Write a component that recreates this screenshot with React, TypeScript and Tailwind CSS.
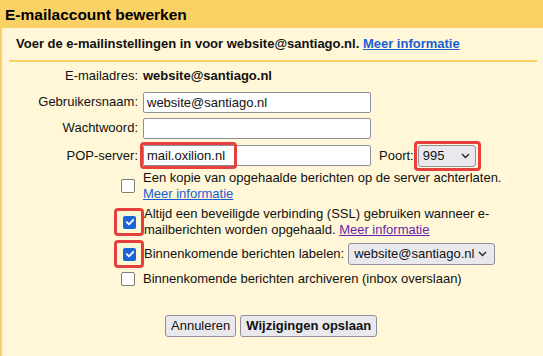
import React from 'react'

const RedMark = ({ className }: { className: string }) => (
  <span className={`pointer-events-none absolute rounded-[4px] border-[3px] border-[#e5403b] ${className}`} />
)

const Check = ({ checked }: { checked?: boolean }) =>
  checked ? (
    <span className="flex h-[13px] w-[13px] items-center justify-center rounded-[2px] bg-[#1a66d9]">
      <svg width="10" height="10" viewBox="0 0 10 10">
        <path d="M1.8 5.2 L4 7.3 L8.3 2.8" fill="none" stroke="#fff" strokeWidth="1.8" strokeLinecap="round" strokeLinejoin="round" />
      </svg>
    </span>
  ) : (
    <span className="block h-[14px] w-[14px] rounded-[2px] border-[1.5px] border-[#7d7d7d] bg-white" />
  )

const Chevron = () => (
  <svg width="9" height="6" viewBox="0 0 9 6" className="shrink-0">
    <path d="M1 1 L4.5 4.5 L8 1" fill="none" stroke="#222" strokeWidth="1.4" />
  </svg>
)

export default function App() {
  return (
    <div className="h-[356px] w-[543px] overflow-hidden bg-[#fff7d7] font-['Liberation_Sans',Arial,sans-serif] text-[13px] text-[#111]">
      {/* Header */}
      <div className="h-[28px] bg-[#fad165] pl-[5px] text-[15.5px] font-bold leading-[30px] text-black">
        E-mailaccount bewerken
      </div>

      <div className="h-[328px] border-l-2 border-[#fad165]">
        <div className="pl-[14px] pt-[8px] font-bold leading-[16px]">
          Voer de e-mailinstellingen in voor website@santiago.nl.{' '}
          <a className="text-[#1a5fd6] underline">Meer informatie</a>
        </div>
        <div className="ml-[7px] mt-[8px] h-[2px] w-[528px] bg-[#fad165]" />

        {/* Form rows */}
        <div className="pt-px">
          <div className="flex h-[26px] items-center">
            <div className="w-[136px] text-right">E-mailadres:</div>
            <div className="pl-[5px] font-bold">website@santiago.nl</div>
          </div>
          <div className="flex h-[26px] items-center">
            <div className="w-[136px] text-right">Gebruikersnaam:</div>
            <div className="pl-[5px]">
              <div className="h-[21px] w-[228px] rounded-[2px] border border-[#8f8f9d] bg-white pl-[3px] leading-[19px]">
                website@santiago.nl
              </div>
            </div>
          </div>
          <div className="flex h-[26px] items-center">
            <div className="w-[136px] text-right">Wachtwoord:</div>
            <div className="pl-[5px]">
              <div className="h-[21px] w-[228px] rounded-[2px] border border-[#8f8f9d] bg-white" />
            </div>
          </div>
          <div className="flex h-[29px] items-center">
            <div className="w-[136px] text-right">POP-server:</div>
            <div className="relative pl-[5px]">
              <div className="h-[21px] w-[228px] rounded-[2px] border border-[#8f8f9d] bg-white pl-[3px] leading-[19px]">
                mail.oxilion.nl
              </div>
              <RedMark className="left-[2px] top-[-3px] h-[27px] w-[97px]" />
            </div>
            <div className="pl-[8px]">Poort:</div>
            <div className="relative ml-[4px]">
              <div className="flex h-[22px] w-[58px] items-center justify-between rounded-[3px] border border-[#8f8f9d] bg-[#e9e9ed] pl-[4px] pr-[5px]">
                <span>995</span>
                <Chevron />
              </div>
              <RedMark className="left-[-4px] top-[-4px] h-[30px] w-[67px]" />
            </div>
          </div>

          {/* Checkbox rows */}
          <div className="flex items-center leading-[16px]">
            <div className="flex w-[134px] justify-end pr-[1px]">
              <Check />
            </div>
            <div className="pl-[7px]">
              Een kopie van opgehaalde berichten op de server achterlaten.
              <br />
              <a className="text-[#1a5fd6] underline">Meer informatie</a>
            </div>
          </div>

          <div className="mt-[4px] flex items-center leading-[16px]">
            <div className="flex w-[134px] justify-end">
              <div className="relative">
                <Check checked />
                <RedMark className="left-[-9px] top-[-8px] h-[28px] w-[30px]" />
              </div>
            </div>
            <div className="pl-[8px] pr-[50px]">
              Altijd een beveiligde verbinding (SSL) gebruiken wanneer e-
              <br />
              mailberichten worden opgehaald.{' '}
              <a className="text-[#6a1fa8] underline">Meer informatie</a>
            </div>
          </div>

          <div className="mt-[4px] flex h-[24px] items-center">
            <div className="flex w-[134px] justify-end">
              <div className="relative">
                <Check checked />
                <RedMark className="left-[-9px] top-[-8px] h-[28px] w-[30px]" />
              </div>
            </div>
            <div className="pl-[8px]">Binnenkomende berichten labelen:</div>
            <div className="ml-[4px] flex h-[22px] w-[147px] items-center justify-between rounded-[3px] border border-[#8f8f9d] bg-[#e9e9ed] pl-[5px] pr-[7px]">
              <span>website@santiago.nl</span>
              <Chevron />
            </div>
          </div>

          <div className="mt-[5px] flex items-center leading-[16px]">
            <div className="flex w-[134px] justify-end pr-[1px]">
              <Check />
            </div>
            <div className="pl-[7px]">Binnenkomende berichten archiveren (inbox overslaan)</div>
          </div>

          {/* Buttons */}
          <div className="mt-[28px] flex gap-[4px] pl-[163px]">
            <button
              type="button"
              className="h-[22px] rounded-[3px] border border-[#8f8f9d] bg-[#e9e9ed] px-[5px] text-[13px] leading-[20px]"
            >
              Annuleren
            </button>
            <button
              type="button"
              className="h-[22px] rounded-[3px] border border-[#8f8f9d] bg-[#e9e9ed] px-[5px] text-[13px] font-bold leading-[20px]"
            >
              Wijzigingen opslaan
            </button>
          </div>
        </div>
      </div>
    </div>
  )
}
